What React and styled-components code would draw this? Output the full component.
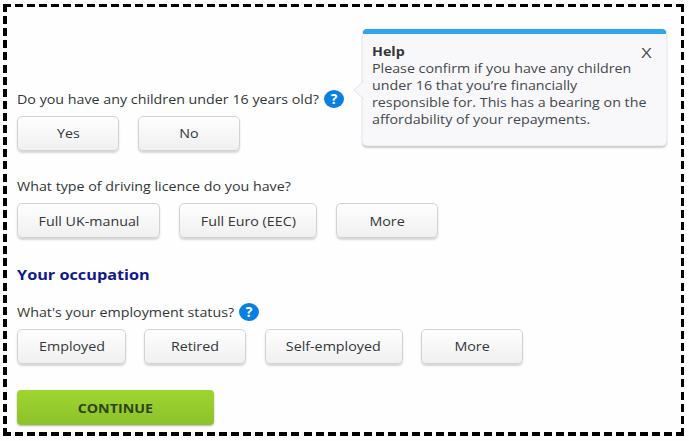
import React from "react";
import { styled, createGlobalStyle } from "styled-components";

/***********************Styles*************************/
//variables
const textColor = "#333638";
const helpBlue = "#0a7fe2";
const stretch = 1.097;
const dashX = "repeating-linear-gradient(90deg, #000 0 8px, transparent 8px 12.02px)";
const dashY = "repeating-linear-gradient(180deg, #000 0 8px, transparent 8px 12.11px)";
//variables

const GlobalStyle = createGlobalStyle`
  * {
    box-sizing: border-box;
  }
  body {
    margin: 0;
    background: #fefefe;
    color: ${textColor};
    font-family: "Open Sans", sans-serif;
    font-size: 13px;
  }
`;

const Frame = styled.main`
  width: 681px;
  height: 432px;
  margin: 4px 0 0 3px;
  padding: 25px 17px 0 14.3px;
  background-image: ${dashX}, ${dashX}, ${dashY}, ${dashY};
  background-repeat: no-repeat;
  background-size: 100% 3px, 100% 4px, 4px 100%, 3px 100%;
  background-position: 0 0, 0 100%, 0 0, 100% 0;
`;

const Top = styled.div`
  display: flex;
  justify-content: space-between;
  height: 148px;
`;

const Children = styled.section`
  padding-top: 61px;
`;

const Group = styled.section`
  height: ${(props) => props.$height}px;
`;

const Question = styled.div`
  display: flex;
  align-items: center;
  height: 18px;
  margin-bottom: ${(props) => props.$gap}px;
`;

const Wide = styled.span`
  display: inline-block;
  white-space: nowrap;
  transform: scaleX(${(props) => props.$by || stretch});
  transform-origin: ${(props) => props.$origin || "left"} center;
`;

const Label = styled.label`
  display: block;
  width: ${(props) => props.$width}px;
  line-height: 18px;
`;

const HelpButton = styled.button`
  width: 20px;
  height: 18px;
  padding: 0;
  border: 0;
  border-radius: 50%;
  background: ${helpBlue};
  color: white;
  font: bold 14px/18px "Open Sans", sans-serif;
  text-align: center;
`;

const Options = styled.div`
  display: flex;
  gap: ${(props) => props.$gap}px;
`;

const Option = styled.button`
  width: ${(props) => props.$width}px;
  height: 35px;
  padding: 0 0 ${(props) => props.$lift || 0}px;
  border: 1px solid #d2d3d5;
  border-radius: 5px;
  background: linear-gradient(#fefefe, #f0f0f1);
  box-shadow: 0 2px 2px rgba(0, 0, 0, 0.16);
  color: ${textColor};
  font: inherit;
  text-align: center;
`;

const Heading = styled.h2`
  height: 20px;
  margin: 0 0 18px;
  color: #10188a;
  font-size: 14px;
  line-height: 20px;
`;

const Continue = styled.button`
  width: 197px;
  height: 35px;
  padding: 0;
  border: 0;
  border-radius: 4px;
  background: linear-gradient(#9fd52f, #8cc22b);
  box-shadow: 0 1px 2px rgba(0, 0, 0, 0.3);
  color: #2f4416;
  font: bold 13px "Open Sans", sans-serif;
`;

const HelpBox = styled.aside`
  position: relative;
  display: flex;
  justify-content: space-between;
  width: 305px;
  height: 117px;
  padding: 9px 14px 0 9.4px;
  border: 1px solid #ececf1;
  border-top: 5px solid #2ba6ee;
  border-radius: 5px;
  background: #f8f8fb;
  box-shadow: 0 2px 2px rgba(0, 0, 0, 0.2);
  color: #45484b;
  line-height: 17.1px;
`;

const Pointer = styled.svg`
  position: absolute;
  left: -10px;
  top: 46px;
`;

const HelpTitle = styled.strong`
  display: block;
  color: #333638;
`;

const Close = styled.button`
  width: 12px;
  height: 20px;
  margin-top: -1px;
  padding: 0;
  border: 0;
  background: none;
  color: #45484b;
  font: 15px/20px "Open Sans", sans-serif;
`;

/***********************Component*************************/

const OptionRow = ({ items, gap, lift }) => (
  <Options $gap={gap}>
    {items.map(([name, width]) => (
      <Option key={name} $width={width} $lift={lift}>
        <Wide $origin="center">{name}</Wide>
      </Option>
    ))}
  </Options>
);

const helpLines = [
  "Please confirm if you have any children",
  "under 16 that you’re financially",
  "responsible for. This has a bearing on the",
  "affordability of your repayments.",
];

const App = () => {
  return (
    <>
      <GlobalStyle />
      <Frame>
        <Top>
          <Children>
            <Question $gap={8}>
              <Label $width={306.7}>
                <Wide>Do you have any children under 16 years old?</Wide>
              </Label>
              <HelpButton>?</HelpButton>
            </Question>
            <OptionRow gap={18.7} lift={1} items={[["Yes", 102], ["No", 102]]} />
          </Children>
          <HelpBox>
            <Pointer width="11" height="20" viewBox="0 0 11 20">
              <path d="M11 1L1 10L11 19" fill="#f8f8fb" stroke="#e2e2e8" />
            </Pointer>
            <div>
              <HelpTitle>
                <Wide>Help</Wide>
              </HelpTitle>
              {helpLines.map((line) => (
                <div key={line}>
                  <Wide>{line}</Wide>
                </div>
              ))}
            </div>
            <Close>
              <Wide $origin="center" $by={1.2}>X</Wide>
            </Close>
          </HelpBox>
        </Top>

        <Group $height={88}>
          <Question $gap={8}>
            <Label $width={280}>
              <Wide>What type of driving licence do you have?</Wide>
            </Label>
          </Question>
          <OptionRow
            gap={18.5}
            items={[["Full UK-manual", 143], ["Full Euro (EEC)", 138.5], ["More", 102]]}
          />
        </Group>

        <Heading>
          <Wide $by={1.16}>Your occupation</Wide>
        </Heading>

        <Group $height={87}>
          <Question $gap={8}>
            <Label $width={221.7}>
              <Wide>What's your employment status?</Wide>
            </Label>
            <HelpButton>?</HelpButton>
          </Question>
          <OptionRow
            gap={18.2}
            lift={1}
            items={[["Employed", 108.8], ["Retired", 102.2], ["Self-employed", 138], ["More", 102]]}
          />
        </Group>

        <Continue>
          <Wide $origin="center">CONTINUE</Wide>
        </Continue>
      </Frame>
    </>
  );
};

export default App;
